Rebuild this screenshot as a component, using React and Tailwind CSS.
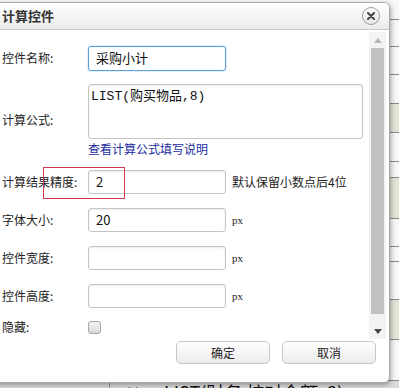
import React from "react";

const CJK = '"Noto Sans CJK SC", "Liberation Sans", sans-serif';

function Label({ children }) {
  return (
    <div className="w-[86px] shrink-0 text-[12px] text-[#222]" style={{ fontFamily: CJK }}>
      {children}
    </div>
  );
}

function Input({ value, focused, h = "h-[24px]" }) {
  return (
    <div
      className={`w-[138px] ${h} shrink-0 rounded-[3px] border bg-white flex items-center pl-[7px] text-[13px] text-[#111] ${
        focused
          ? "border-[#5aa0d8] shadow-[0_0_2px_rgba(80,150,220,0.5)]"
          : "border-[#c4c4c4] shadow-[inset_0_1px_2px_rgba(0,0,0,0.08)]"
      }`}
      style={{ fontFamily: CJK }}
    >
      {value}
    </div>
  );
}

function Px() {
  return (
    <span className="ml-[6px] text-[11px] text-[#222]" style={{ fontFamily: '"Liberation Serif", serif' }}>
      px
    </span>
  );
}

function Button({ children }) {
  return (
    <div
      className="w-[94px] h-[23px] rounded-[5px] border border-[#c6c6c6] bg-gradient-to-b from-white to-[#ececec] flex items-center justify-center text-[12px] text-[#222]"
      style={{ fontFamily: CJK }}
    >
      {children}
    </div>
  );
}

const bgRows = [
  { h: 20 }, { h: 27 }, { h: 28 }, { h: 29 }, { h: 29, g: true }, { h: 29 },
  { h: 16 }, { h: 41, g: true }, { h: 28 }, { h: 15 }, { h: 38 }, { h: 40, g: true }, { h: 41 },
];

export default function App() {
  return (
    <div className="relative w-[399px] h-[388px] overflow-hidden bg-[#f7f7f7]" style={{ fontFamily: CJK }}>
      {/* background page */}
      <div className="flex flex-col w-full">
        {bgRows.map((r, i) => (
          <div
            key={i}
            className={`w-full border-b border-[#8a8a8a] ${r.g ? "bg-[#e3e6d6]" : "bg-[#f7f7f7]"}`}
            style={{ height: r.h }}
          />
        ))}
        <div className="w-full h-[20px] bg-[#dcdcdc] flex">
          <div className="w-[110px] h-full border-r border-[#9a9a9a]" />
          <div className="pl-[18px] pt-[1px] text-[18px] leading-[20px] text-[#111] whitespace-nowrap">
            ¥ • LIST(财务 核对金额, 2)
          </div>
        </div>
      </div>

      {/* dialog */}
      <div className="absolute left-[-10px] top-[2px] w-[400px] h-[381px] rounded-[6px] border border-[#a9a9a9] bg-white shadow-[1px_2px_5px_rgba(0,0,0,0.35)] overflow-hidden flex flex-col">
        {/* title bar */}
        <div className="h-[27px] shrink-0 border-b border-[#c9c9c9] bg-gradient-to-b from-white to-[#ebebeb] flex items-center justify-between pl-[11px] pr-[9px]">
          <span className="text-[13px] font-bold text-[#333]">计算控件</span>
          <div className="w-[18px] h-[18px] rounded-full border border-[#9c9c9c] bg-gradient-to-b from-white to-[#e6e6e6] flex items-center justify-center">
            <svg width="8" height="8" viewBox="0 0 8 8">
              <path d="M1 1 L7 7 M7 1 L1 7" stroke="#444" strokeWidth="2" strokeLinecap="round" />
            </svg>
          </div>
        </div>

        {/* body */}
        <div className="flex mt-[2px] h-[307px]">
          <div className="flex-1 overflow-hidden pl-[11px] pt-[7px] flex flex-col">
            <div className="h-[38px] flex items-center shrink-0">
              <Label>控件名称:</Label>
              <Input value="采购小计" focused h="h-[25px]" />
            </div>
            <div className="h-[86px] flex items-center shrink-0">
              <Label>计算公式:</Label>
              <div className="flex flex-col gap-[3px]">
                <div
                  className="w-[275px] h-[55px] rounded-[3px] border border-[#c4c4c4] shadow-[inset_0_1px_2px_rgba(0,0,0,0.08)] px-[2px] pt-[4px] text-[13px] leading-[16px] text-[#111]"
                  style={{ fontFamily: '"Liberation Mono", "Noto Sans CJK SC", monospace' }}
                >
                  LIST(购买物品,8)
                </div>
                <span className="text-[12px] leading-[14px] text-[#1a2b9c]">查看计算公式填写说明</span>
              </div>
            </div>
            <div className="h-[38px] flex items-center shrink-0">
              <Label>计算结果精度:</Label>
              <Input value="2" />
              <span className="ml-[6px] text-[12px] text-[#222]">默认保留小数点后4位</span>
            </div>
            <div className="h-[38px] flex items-center shrink-0">
              <Label>字体大小:</Label>
              <Input value="20" />
              <Px />
            </div>
            <div className="h-[38px] flex items-center shrink-0">
              <Label>控件宽度:</Label>
              <Input value="" />
              <Px />
            </div>
            <div className="h-[38px] flex items-center shrink-0">
              <Label>控件高度:</Label>
              <Input value="" />
              <Px />
            </div>
            <div className="h-[24px] flex items-center shrink-0">
              <Label>隐藏:</Label>
              <div className="w-[13px] h-[13px] rounded-[3px] border border-[#a8a8a8] bg-gradient-to-b from-[#f4f4f4] to-[#d8d8d8]" />
            </div>
          </div>

          {/* scrollbar */}
          <div className="w-[17px] mr-[3px] shrink-0 bg-[#f3f3f3] flex flex-col">
            <div className="h-[16px] flex items-center justify-center">
              <svg width="8" height="5" viewBox="0 0 8 5">
                <path d="M0 5 L4 0 L8 5 Z" fill="#b4b4b4" />
              </svg>
            </div>
            <div className="ml-[2px] w-[13px] h-[266px] bg-[#c1c1c1]" />
            <div className="flex-1" />
            <div className="h-[16px] flex items-center justify-center">
              <svg width="8" height="5" viewBox="0 0 8 5">
                <path d="M0 0 L8 0 L4 5 Z" fill="#4a4a4a" />
              </svg>
            </div>
          </div>
        </div>

        {/* buttons */}
        <div className="flex justify-end gap-[12px] pr-[13px] pt-[2px]">
          <Button>确定</Button>
          <Button>取消</Button>
        </div>
      </div>

      {/* red annotation box */}
      <div className="absolute left-[43px] top-[167px] w-[82px] h-[32px] border border-[#cf3a52]" />
    </div>
  );
}
